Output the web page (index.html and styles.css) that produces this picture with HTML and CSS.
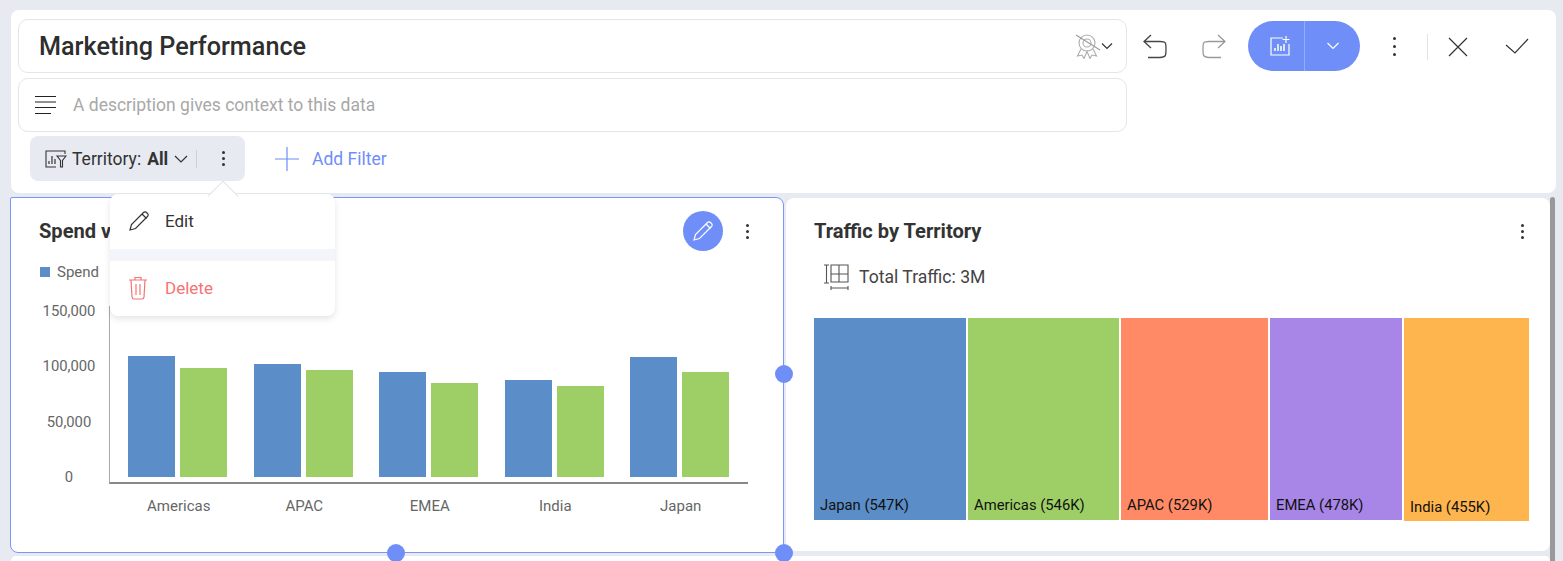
FILE: index.html
```html
<!DOCTYPE html>
<html lang="en">
<head>
  <meta charset="UTF-8" />
  <title>Marketing Performance</title>
  <link rel="stylesheet" href="styles.css">
</head>
<body>
  <div class="top-panel">
    <div class="top-row">
      <div class="fields">
        <div class="field title-field">
          <span class="title">Marketing Performance</span>
          <svg class="award" width="26" height="26" viewBox="0 0 26 26" fill="none" stroke="#adadad" stroke-width="1.100">
            <circle cx="12" cy="10" r="8"/>
            <circle cx="12" cy="10" r="4"/>
            <path d="M6 16l-3.500 7 4.500-1 2 3.500 3-7 3 7 2-3.500 4.500 1-3.500-7"/>
            <path d="M1 2l24 15" stroke="#999"/>
          </svg>
          <svg class="caret" width="12" height="8" viewBox="0 0 12 8" fill="none" stroke="#333" stroke-width="1.200"><path d="M1 1.500l5 5 5-5"/></svg>
        </div>
        <div class="field desc-field">
          <svg width="22" height="20" viewBox="0 0 22 20" stroke="#222" stroke-width="1.200"><path d="M1 1.500h21M1 7h21M1 12.500h21M1 18.500h16"/></svg>
          <span class="desc">A description gives context to this data</span>
        </div>
      </div>
      <div class="toolbar">
        <svg class="undo" width="26" height="26" viewBox="0 0 26 26" fill="none" stroke="#444" stroke-width="1.300"><path d="M9 2L2 8.500l7 6.500M2 8.500h16c6 0 6 1 6 7.500s0 8.500-6 8.500H6"/></svg>
        <svg class="redo" width="26" height="26" viewBox="0 0 26 26" fill="none" stroke="#9a9a9a" stroke-width="1.300"><path d="M17 2l7 6.500-7 6.500M24 8.500H8c-6 0-6 1-6 7.500s0 8.500 6 8.500h12"/></svg>
        <div class="split-btn">
          <div class="split-main">
            <svg width="22" height="22" viewBox="0 0 22 22" fill="none" stroke="#fff" stroke-width="1.200"><path d="M14 3H2v17h18V9M17 1v7M13.500 4.500h7"/><path d="M6 16v-3M9 16V9M12 16v-5M15 16V9" stroke-width="1.500"/></svg>
          </div>
          <div class="split-arrow">
            <svg width="14" height="8" viewBox="0 0 14 8" fill="none" stroke="#fff" stroke-width="1.200"><path d="M1.500 1l5.500 5.500L12.500 1"/></svg>
          </div>
        </div>
        <div class="dots big"><i></i><i></i><i></i></div>
        <div class="tool-sep"></div>
        <svg class="close" width="20" height="20" viewBox="0 0 20 20" stroke="#333" stroke-width="1.200"><path d="M1 1l18 18M19 1L1 19"/></svg>
        <svg class="check" width="24" height="18" viewBox="0 0 24 18" fill="none" stroke="#333" stroke-width="1.200"><path d="M1 7l9 8L23 1"/></svg>
      </div>
    </div>
    <div class="filter-row">
      <div class="chip">
        <svg width="22" height="18" viewBox="0 0 22 18" fill="none" stroke="#333" stroke-width="1.100"><path d="M20 4V1H1v16h10"/><path d="M4 14v-3M7 14V6M10 14V9" stroke-width="1.200"/><path d="M12 6h9l-3.500 4.500V17h-2v-6.500z"/></svg>
        <span class="chip-label">Territory:</span>
        <b class="chip-value">All</b>
        <svg width="14" height="8" viewBox="0 0 14 8" fill="none" stroke="#333" stroke-width="1.200"><path d="M1 1l6 6 6-6"/></svg>
        <span class="chip-sep"></span>
        <div class="dots"><i></i><i></i><i></i></div>
      </div>
      <div class="add-filter">
        <svg width="24" height="24" viewBox="0 0 24 24" stroke="#6f8ef7" stroke-width="1.200"><path d="M12 0v24M0 12h24"/></svg>
        <span>Add Filter</span>
      </div>
    </div>
  </div>

  <div class="cards">
    <div class="card card-left">
      <div class="card-head">
        <span class="card-title">Spend v</span>
        <div class="edit-btn">
          <svg width="22" height="22" viewBox="0 0 22 22" fill="none" stroke="#fff" stroke-width="1.200"><path d="M2 20l1.500-5.500L15.500 2.500a2 2 0 0 1 3 0l1 1a2 2 0 0 1 0 3L7.500 18.500z"/><path d="M14 4l4.500 4.500"/></svg>
        </div>
        <div class="dots"><i></i><i></i><i></i></div>
      </div>
      <div class="legend"><i class="swatch"></i>Spend</div>
      <div class="chart">
        <div class="y-axis"><span>150,000</span><span>100,000</span><span>50,000</span><span>0</span></div>
        <div class="plot">
          <div class="bars">
            <div class="group"><i class="bar blue" style="height:121px"></i><i class="bar green" style="height:109px"></i></div>
            <div class="group"><i class="bar blue" style="height:113px"></i><i class="bar green" style="height:107px"></i></div>
            <div class="group"><i class="bar blue" style="height:105px"></i><i class="bar green" style="height:94px"></i></div>
            <div class="group"><i class="bar blue" style="height:97px"></i><i class="bar green" style="height:91px"></i></div>
            <div class="group"><i class="bar blue" style="height:120px"></i><i class="bar green" style="height:105px"></i></div>
          </div>
          <div class="x-axis"><span>Americas</span><span>APAC</span><span>EMEA</span><span>India</span><span>Japan</span></div>
        </div>
      </div>
    </div>

    <div class="card card-right">
      <div class="card-head">
        <span class="card-title">Traffic by Territory</span>
        <div class="dots"><i></i><i></i><i></i></div>
      </div>
      <div class="total">
        <svg width="26" height="26" viewBox="0 0 26 26" fill="none" stroke="#555" stroke-width="1.100"><path d="M1 1h5M3.500 1v18M1 19h5M8 1h17v17H8zM16 1v17M8 10h17M8 22v4M25 22v4M8 24h17"/></svg>
        <span>Total Traffic: 3M</span>
      </div>
      <div class="treemap">
        <div class="tile t-japan" style="width:154px"><span>Japan (547K)</span></div>
        <div class="tile t-americas" style="width:153px"><span>Americas (546K)</span></div>
        <div class="tile t-apac" style="width:149px"><span>APAC (529K)</span></div>
        <div class="tile t-emea" style="width:134px"><span>EMEA (478K)</span></div>
        <div class="tile t-india" style="width:125px"><span>India (455K)</span></div>
      </div>
    </div>
    <div class="scrollbar"></div>
  </div>
  <div class="next-row"></div>

  <!-- selection handles sit over the cards -->
  <div class="handle h-bottom"></div>
  <div class="handle h-right"></div>
  <div class="handle h-corner"></div>

  <div class="menu">
    <div class="menu-arrow"></div>
    <div class="menu-item">
      <svg width="22" height="22" viewBox="0 0 22 22" fill="none" stroke="#333" stroke-width="1.200"><path d="M2 20l1.500-5.500L15.500 2.500a2 2 0 0 1 3 0l1 1a2 2 0 0 1 0 3L7.500 18.500z"/><path d="M14 4l4.500 4.500"/></svg>
      <span>Edit</span>
    </div>
    <div class="menu-sep"></div>
    <div class="menu-item danger">
      <svg width="20" height="24" viewBox="0 0 20 24" fill="none" stroke="#f57373" stroke-width="1.200"><path d="M1 4h18M7 4V1.500h6V4M3 4l1 17q.2 2 2 2h8q1.800 0 2-2l1-17M8 8v11M12 8v11"/></svg>
      <span>Delete</span>
    </div>
  </div>
</body>
</html>
```

FILE: styles.css
```css
* {
  box-sizing: border-box;
}
html, body {
  height: 561px;
  overflow: hidden;
}
body {
  margin: 0;
  padding-top: 10px;
  background: #e8eaf2;
  font-family: Roboto, sans-serif;
  color: #333;
  position: relative;
}
.top-panel {
  margin: 0 7px 0 11px;
  height: 183px;
  background: #fff;
  border-radius: 8px;
  padding: 9px 7px 0;
}
.top-row {
  display: flex;
}
.fields {
  width: 1109px;
  display: flex;
  flex-direction: column;
  gap: 5px;
}
.field {
  height: 54px;
  border: 1px solid #e6e6e6;
  border-radius: 10px;
  display: flex;
  align-items: center;
}
.title-field {
  padding: 0 13px 0 20px;
}
.title {
  flex: 1;
  font-size: 25.200px;
  font-weight: 500;
  color: #2e2e2e;
}
.desc-field {
  padding: 0 0 1px 15px;
  gap: 17px;
}
.desc {
  font-size: 17.500px;
  color: #a8a8a8;
}
.toolbar {
  display: flex;
  align-items: flex-start;
  padding: 2px 0 0 15px;
}
.undo {
  margin-top: 12px;
}
.redo {
  margin: 12px 0 0 33px;
}
.split-btn {
  margin-left: 21px;
  width: 112px;
  height: 50px;
  background: #6f8ef7;
  border-radius: 25px;
  display: flex;
}
.split-main {
  width: 57px;
  border-right: 1px solid #94acf9;
  display: flex;
  align-items: center;
  justify-content: center;
  padding-left: 8px;
}
.split-arrow {
  flex: 1;
  display: flex;
  align-items: center;
  justify-content: center;
}
.dots {
  display: flex;
  flex-direction: column;
  gap: 3px;
  width: 4px;
}
.dots i {
  width: 3px;
  height: 3px;
  background: #333;
  border-radius: 50%;
}
.dots.big {
  margin: 16px 0 0 33px;
  gap: 5px;
}
.tool-sep {
  width: 1px;
  height: 26px;
  background: #e2e2e2;
  margin: 13px 0 0 30px;
}
.close {
  margin: 16px 0 0 20px;
}
.check {
  margin: 17px 0 0 37px;
}
.filter-row {
  display: flex;
  align-items: center;
  margin: 4px 0 0 12px;
}
.chip {
  width: 215px;
  height: 45px;
  background: #e8eaf1;
  border-radius: 8px;
  display: flex;
  align-items: center;
  padding-left: 15px;
  font-size: 17.500px;
  color: #333;
}
.chip-label {
  margin-left: 5px;
}
.chip-value {
  margin: 0 6px;
}
.chip-sep {
  width: 1px;
  height: 18px;
  background: #cfd1d8;
  margin: 0 25px 0 8px;
}
.add-filter {
  margin-left: 30px;
  display: flex;
  align-items: center;
  gap: 13px;
  font-size: 17.500px;
  color: #6f8ef7;
}
.cards {
  display: flex;
  margin: 4px 0 0 10px;
  height: 357px;
  align-items: flex-start;
}
.card {
  background: #fff;
  border-radius: 8px;
}
.card-left {
  width: 774px;
  height: 356px;
  border: 1.500px solid #7a97f8;
  border-radius: 2px 8px 8px 8px;
  padding: 13px 28px 0;
}
.card-right {
  width: 764px;
  height: 353px;
  margin: 1px 0 0 2px;
  padding: 12px 25px 0 28px;
}
.card-head {
  display: flex;
  align-items: center;
  height: 42px;
}
.card-left .card-head {
  height: 40px;
  padding-right: 5px;
}
.card-title {
  flex: 1;
  font-size: 20.100px;
  font-weight: 700;
  color: #333;
}
.edit-btn {
  width: 40px;
  height: 40px;
  border-radius: 50%;
  background: #6f8ef7;
  display: flex;
  align-items: center;
  justify-content: center;
  margin-right: 23px;
}
.legend {
  display: flex;
  align-items: center;
  gap: 7px;
  font-size: 15px;
  color: #666;
  margin-top: 12px;
  padding-left: 1px;
  height: 18px;
}
.swatch {
  width: 10px;
  height: 10px;
  background: #5b8dc9;
}
.chart {
  display: flex;
  margin: 25px 0 0 0;
}
.y-axis {
  width: 53px;
  height: 182px;
  margin: -3px 13.500px 0 3.500px;
  display: flex;
  flex-direction: column;
  justify-content: space-between;
  align-items: center;
  font-size: 14.800px;
  color: #666;
  line-height: 16px;
}
.plot {
  width: 639px;
}
.bars {
  height: 178px;
  border-left: 1px solid #aaa;
  border-bottom: 2px solid #888;
  display: flex;
  align-items: flex-end;
  padding: 0 19px 5px 18px;
  justify-content: space-between;
}
.group {
  display: flex;
  align-items: flex-end;
  gap: 5px;
}
.bar {
  display: block;
  width: 47px;
}
.blue {
  background: #5b8dc9;
}
.green {
  background: #9ecf66;
}
.x-axis {
  display: flex;
  padding: 13px 0 0 7px;
  font-size: 15px;
  color: #666;
}
.x-axis span {
  width: 125.500px;
  text-align: center;
}
.total {
  display: flex;
  align-items: center;
  gap: 10px;
  margin: 7px 0 0 9px;
  height: 36px;
  font-size: 17.600px;
  color: #444;
}
.treemap {
  display: flex;
  align-items: flex-start;
  margin-top: 23px;
}
.tile {
  flex: none;
  height: 202px;
  border-right: 2px solid #fff;
  display: flex;
  align-items: flex-end;
  padding: 0 0 6px 6px;
  font-size: 14.800px;
  color: #111;
}
.t-japan {
  background: #5b8dc9;
}
.t-americas {
  background: #9ecf66;
}
.t-apac {
  background: #ff8a65;
}
.t-emea {
  background: #a886e8;
}
.t-india {
  background: #ffb54d;
  height: 203px;
  border-right: 0;
  padding-bottom: 5px;
}
.scrollbar {
  width: 5px;
  height: 364px;
  background: #999;
  border-radius: 3px 3px 0 0;
  flex: none;
}
.next-row {
  margin: 2px 13px 0 11px;
  height: 5px;
  background: #fff;
  border-radius: 8px 8px 0 0;
}
.handle {
  position: absolute;
  width: 18px;
  height: 18px;
  border-radius: 50%;
  background: #6f8ef7;
}
.h-bottom {
  left: 387px;
  top: 544px;
}
.h-right {
  left: 775px;
  top: 365px;
}
.h-corner {
  left: 775px;
  top: 544px;
}
.menu {
  position: absolute;
  left: 110px;
  top: 194px;
  width: 225px;
  height: 122px;
  background: #fff;
  border-radius: 8px;
  box-shadow: 0 3px 6px rgba(0, 0, 0, 0.1);
  font-size: 17px;
  color: #333;
}
.menu-arrow {
  position: absolute;
  left: 102px;
  top: -9px;
  width: 22px;
  height: 22px;
  background: #fff;
  border-left: 1px solid #e4e4e4;
  border-top: 1px solid #e4e4e4;
  transform: rotate(45deg);
}
.menu-item {
  position: relative;
  height: 55px;
  display: flex;
  align-items: center;
  padding: 0 0 2px 18px;
  gap: 15px;
}
.menu-sep {
  height: 12px;
  background: #f4f5fa;
}
.danger {
  color: #f57373;
  gap: 17px;
}
```
